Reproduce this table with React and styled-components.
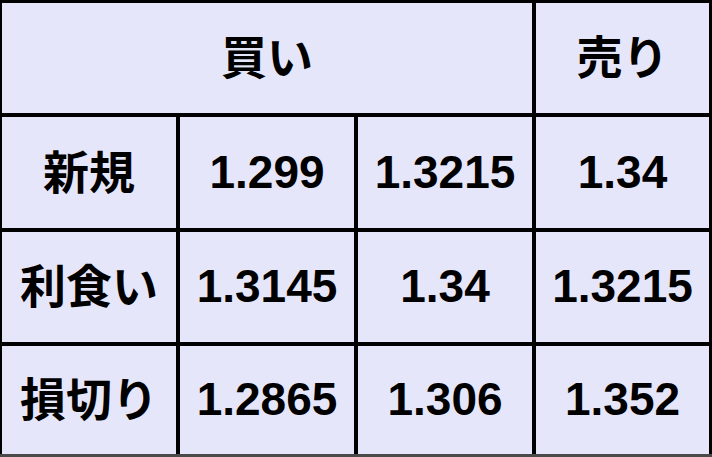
import React from "react";
import styled, { createGlobalStyle } from "styled-components";

const Global = createGlobalStyle`
  html, body { margin: 0; padding: 0; background: #ffffff; }
  #root { width: 712px; height: 457px; }
`;

const Table = styled.div`
  display: grid;
  grid-template-columns: 174px 174px 174px 173px;
  grid-template-rows: 110px 111px 110px 108px;
  gap: 4px;
  width: 712px;
  height: 457px;
  box-sizing: border-box;
  padding: 3px 3px 0 2px;
  border-bottom: 3px solid #4a4a4a;
  background: #000000;
`;

const Cell = styled.div`
  grid-column: span ${(p) => p.$span || 1};
  background: #e6e6fa;
  display: flex;
  align-items: center;
  justify-content: center;
  box-sizing: border-box;
  padding-bottom: ${(p) => (p.$jp ? "8px" : "2px")};
  color: #000000;
  font-weight: 700;
  font-size: 46px;
  font-family: ${(p) =>
    p.$jp
      ? '"Noto Sans CJK JP", "Noto Sans", sans-serif'
      : '"Liberation Sans", Arial, sans-serif'};
  line-height: 1;
  white-space: nowrap;
`;

const rows = [
  ["新規", "1.299", "1.3215", "1.34"],
  ["利食い", "1.3145", "1.34", "1.3215"],
  ["損切り", "1.2865", "1.306", "1.352"],
];

export default function App() {
  return (
    <>
      <Global />
      <Table>
        <Cell $span={3} $jp>買い</Cell>
        <Cell $jp>売り</Cell>
        {rows.map((r) =>
          r.map((v, i) => (
            <Cell key={r[0] + i} $jp={i === 0}>
              {v}
            </Cell>
          ))
        )}
      </Table>
    </>
  );
}
